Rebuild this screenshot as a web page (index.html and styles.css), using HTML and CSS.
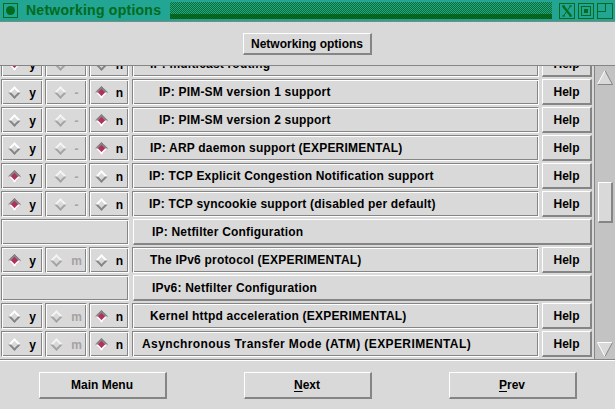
FILE: index.html
```html
<!DOCTYPE html>
<html>
<head>
<meta charset="utf-8">
<title>Networking options</title>
<link rel="stylesheet" href="styles.css">
</head>
<body>
<div class="titlebar">
  <div class="tb-icon"><span></span></div>
  <div class="tb-title">Networking options</div>
  <div class="tb-fill"><div class="fill-top"></div><div class="fill-bot"></div></div>
  <div class="tb-btn">
    <svg width="16" height="16" viewBox="0 0 16 16"><rect x="0.5" y="0.5" width="15" height="15" fill="none" stroke="#006b1c"/><path d="M4 3L12 13" stroke="#006b1c" stroke-width="2.2"/><path d="M11.5 3L4.5 13" stroke="#006b1c" stroke-width="1"/><path d="M3 3h3M10 3h3M3 13h3M10 13h3" stroke="#006b1c" stroke-width="1"/></svg>
  </div>
  <div class="tb-btn">
    <svg width="16" height="16" viewBox="0 0 16 16"><rect x="0.5" y="0.5" width="15" height="15" fill="none" stroke="#006b1c"/><rect x="3.5" y="3.5" width="9" height="9" fill="none" stroke="#006b1c"/><rect x="6" y="6" width="4" height="4" fill="#006b1c"/></svg>
  </div>
  <div class="tb-btn">
    <svg width="16" height="16" viewBox="0 0 16 16"><rect x="0.5" y="0.5" width="15" height="15" fill="none" stroke="#006b1c"/><path d="M8.5 1V8.5H1" fill="none" stroke="#006b1c"/></svg>
  </div>
</div>

<div class="top">
  <div class="btn btn-top">Networking options</div>
</div>

<div class="main">
  <div class="canvas">
    <div class="rows">
      <div class="row">
        <div class="cell radio"><span class="ind"><i class="dia on"></i></span>y</div>
        <div class="cell radio dis"><span class="ind"><i class="dia"></i></span>-</div>
        <div class="cell radio rn"><span class="ind"><i class="dia"></i></span>n</div>
        <div class="cell label p17">IP: multicast routing</div>
        <div class="btn help">Help</div>
      </div>
      <div class="row">
        <div class="cell radio"><span class="ind"><i class="dia"></i></span>y</div>
        <div class="cell radio dis"><span class="ind"><i class="dia"></i></span>-</div>
        <div class="cell radio rn"><span class="ind"><i class="dia on"></i></span>n</div>
        <div class="cell label p26">IP: PIM-SM version 1 support</div>
        <div class="btn help">Help</div>
      </div>
      <div class="row">
        <div class="cell radio"><span class="ind"><i class="dia"></i></span>y</div>
        <div class="cell radio dis"><span class="ind"><i class="dia"></i></span>-</div>
        <div class="cell radio rn"><span class="ind"><i class="dia on"></i></span>n</div>
        <div class="cell label p26">IP: PIM-SM version 2 support</div>
        <div class="btn help">Help</div>
      </div>
      <div class="row">
        <div class="cell radio"><span class="ind"><i class="dia"></i></span>y</div>
        <div class="cell radio dis"><span class="ind"><i class="dia"></i></span>-</div>
        <div class="cell radio rn"><span class="ind"><i class="dia on"></i></span>n</div>
        <div class="cell label p17">IP: ARP daemon support (EXPERIMENTAL)</div>
        <div class="btn help">Help</div>
      </div>
      <div class="row">
        <div class="cell radio"><span class="ind"><i class="dia on"></i></span>y</div>
        <div class="cell radio dis"><span class="ind"><i class="dia"></i></span>-</div>
        <div class="cell radio rn"><span class="ind"><i class="dia"></i></span>n</div>
        <div class="cell label p16">IP: TCP Explicit Congestion Notification support</div>
        <div class="btn help">Help</div>
      </div>
      <div class="row">
        <div class="cell radio"><span class="ind"><i class="dia on"></i></span>y</div>
        <div class="cell radio dis"><span class="ind"><i class="dia"></i></span>-</div>
        <div class="cell radio rn"><span class="ind"><i class="dia"></i></span>n</div>
        <div class="cell label p16">IP: TCP syncookie support (disabled per default)</div>
        <div class="btn help">Help</div>
      </div>
      <div class="row">
        <div class="cell blank"></div>
        <div class="btn menu">IP: Netfilter Configuration</div>
      </div>
      <div class="row">
        <div class="cell radio"><span class="ind"><i class="dia on"></i></span>y</div>
        <div class="cell radio dis"><span class="ind"><i class="dia"></i></span>m</div>
        <div class="cell radio rn"><span class="ind"><i class="dia"></i></span>n</div>
        <div class="cell label p17">The IPv6 protocol (EXPERIMENTAL)</div>
        <div class="btn help">Help</div>
      </div>
      <div class="row">
        <div class="cell blank"></div>
        <div class="btn menu">IPv6: Netfilter Configuration</div>
      </div>
      <div class="row">
        <div class="cell radio"><span class="ind"><i class="dia"></i></span>y</div>
        <div class="cell radio dis"><span class="ind"><i class="dia"></i></span>m</div>
        <div class="cell radio rn"><span class="ind"><i class="dia on"></i></span>n</div>
        <div class="cell label p17">Kernel httpd acceleration (EXPERIMENTAL)</div>
        <div class="btn help">Help</div>
      </div>
      <div class="row">
        <div class="cell radio"><span class="ind"><i class="dia"></i></span>y</div>
        <div class="cell radio dis"><span class="ind"><i class="dia"></i></span>m</div>
        <div class="cell radio rn"><span class="ind"><i class="dia on"></i></span>n</div>
        <div class="cell label p9">Asynchronous Transfer Mode (ATM) (EXPERIMENTAL)</div>
        <div class="btn help">Help</div>
      </div>
    </div>
  </div>
  <div class="sb">
    <svg class="arrow" width="16" height="15" viewBox="0 0 16 15"><polygon points="8,0.5 15.5,14.5 0.5,14.5" fill="#d9d9d9"/><path d="M0.5 14.5L8 0.5" stroke="#fff" fill="none"/><path d="M8 0.5L15.5 14.5H0.5" stroke="#858585" fill="none"/></svg>
    <div class="slider"></div>
    <svg class="arrow down" width="16" height="15" viewBox="0 0 16 15"><polygon points="0.5,0.5 15.5,0.5 8,14.5" fill="#d9d9d9"/><path d="M8 14.5L0.5 0.5H15.5" stroke="#fff" fill="none"/><path d="M15.5 0.5L8 14.5" stroke="#858585" fill="none"/></svg>
  </div>
</div>

<div class="bottom">
  <div class="btn btn-nav">Main Menu</div>
  <div class="btn btn-nav"><u>N</u>ext</div>
  <div class="btn btn-nav"><u>P</u>rev</div>
</div>
</body>
</html>
```
FILE: styles.css
```css
* { box-sizing: border-box; }

body {
  margin: 0;
  width: 615px;
  height: 409px;
  overflow: hidden;
  background: #d9d9d9;
  color: #000;
  font-family: "Liberation Sans", Arial, sans-serif;
  font-weight: bold;
  font-size: 12px;
}

/* ---------- title bar ---------- */
.titlebar {
  height: 22px;
  background: #22a593;
  border-bottom: 1px solid #858585;
  display: flex;
  align-items: flex-start;
}
.tb-icon {
  width: 15px;
  height: 15px;
  margin: 3px 0 0 3px;
  border: 1px solid #006b1c;
  display: flex;
  align-items: center;
  justify-content: center;
}
.tb-icon span {
  width: 9px;
  height: 9px;
  border-radius: 50%;
  background: #006b1c;
}
.tb-title {
  margin-left: 8px;
  font-size: 14px;
  letter-spacing: 0.25px;
  line-height: 20px;
  color: #006b1c;
  white-space: nowrap;
}
.tb-fill {
  width: 382px;
  height: 17px;
  margin: 2px 7px 0 auto;
  display: flex;
  flex-direction: column;
}
.fill-top {
  flex: 1;
  background: repeating-conic-gradient(#0a6f26 0 25%, #22a593 0 50%) 0 0 / 2px 2px;
}
.fill-bot {
  height: 5px;
  background: repeating-conic-gradient(#005c14 0 25%, #0a6f26 0 50%) 0 0 / 2px 2px;
}
.tb-btn {
  width: 16px;
  height: 16px;
  margin: 3px 3px 0 0;
}
.tb-btn:last-child { margin-right: 2px; }
.tb-btn svg { display: block; }

/* ---------- buttons ---------- */
.btn {
  background: #d9d9d9;
  border-style: solid;
  border-width: 1px 2px 2px 1px;
  border-color: #fff #858585 #858585 #fff;
  display: flex;
  align-items: center;
  justify-content: center;
  white-space: nowrap;
}
.btn u { text-decoration-thickness: 1px; text-underline-offset: 2px; }

.top {
  height: 43px;
  padding-top: 11px;
  display: flex;
  justify-content: center;
}
.btn-top {
  width: 129px;
  height: 22px;
}

/* ---------- main scrolled area ---------- */
.main {
  height: 295px;
  border-top: 1px solid #858585;
  border-bottom: 1px solid #858585;
  display: flex;
}
.canvas {
  width: 594px;
  overflow: hidden;
}
.rows { margin-top: -16px; }
.row {
  height: 28px;
  padding: 1px 0 1px 1px;
  display: flex;
}
.cell {
  height: 26px;
  border: 1px solid;
  border-color: #858585 #fff #fff #858585;
  box-shadow: inset 1px 1px 0 #fff, inset -1px -1px 0 #858585;
}
.radio {
  width: 42px;
  margin-right: 2px;
  display: flex;
  align-items: center;
  justify-content: center;
  padding-top: 1px;
}
.radio.rn { width: 40px; margin-right: 3px; }
.radio.dis { color: #a3a3a3; }
.ind {
  width: 13px;
  height: 13px;
  margin-right: 8px;
  margin-top: -1px;
  display: flex;
  align-items: center;
  justify-content: center;
}
.dia {
  display: block;
  width: 9px;
  height: 9px;
  transform: rotate(45deg);
  border: 2px solid;
  border-color: #fff #858585 #858585 #fff;
  background: #d9d9d9;
}
.dia.on {
  border-color: #858585 #fff #fff #858585;
  background: #b03060;
}
.dis .dia { border-color: #f4f4f4 #a3a3a3 #a3a3a3 #f4f4f4; }

.label {
  width: 407px;
  margin-right: 3px;
  display: flex;
  align-items: center;
  white-space: nowrap;
  overflow: hidden;
  letter-spacing: 0.2px;
}
.p9 { padding-left: 9px; letter-spacing: 0.4px; }
.p16 { padding-left: 16px; }
.p17 { padding-left: 17px; }
.p26 { padding-left: 26px; }

.help {
  width: 50px;
  height: 26px;
}
.blank {
  width: 128px;
  margin-right: 4px;
}
.menu {
  width: 459px;
  height: 26px;
  justify-content: flex-start;
  padding-left: 18px;
  letter-spacing: 0.2px;
}

/* ---------- scrollbar ---------- */
.sb {
  width: 21px;
  border-left: 1px solid #858585;
  background: #c3c3c3;
  display: flex;
  flex-direction: column;
  align-items: flex-start;
  padding: 4px 0 2px 2px;
}
.arrow { display: block; flex: none; }
.arrow.down { margin-top: auto; }
.slider {
  width: 15px;
  height: 41px;
  margin: 97px 0 0 1px;
  background: #d9d9d9;
  border-style: solid;
  border-width: 1px 2px 2px 1px;
  border-color: #fff #858585 #858585 #fff;
}

/* ---------- bottom buttons ---------- */
.bottom {
  height: 49px;
  border-top: 1px solid #fff;
  padding-top: 11px;
  display: flex;
  justify-content: space-around;
  align-items: flex-start;
}
.btn-nav {
  width: 128px;
  height: 27px;
}
```
